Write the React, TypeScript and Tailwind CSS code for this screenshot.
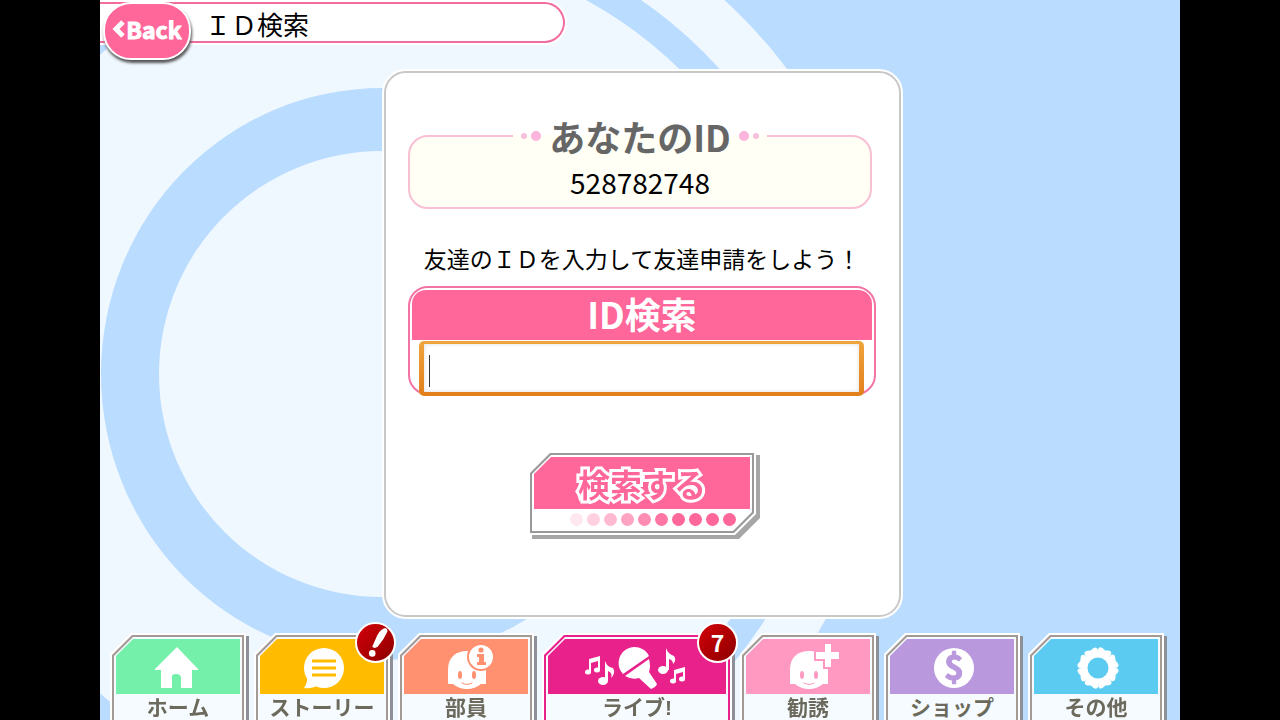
import { useState, type ReactNode } from "react";

type Tab = {
  label: string;
  fill: string;
  line?: string;
  wide?: boolean;
  badge?: ReactNode;
  icon: ReactNode;
};

// Opacity steps of the dot row under the search button
const DOTS = [
  "opacity-15",
  "opacity-30",
  "opacity-45",
  "opacity-60",
  "opacity-75",
  "opacity-90",
  "opacity-100",
  "opacity-100",
  "opacity-100",
  "opacity-100",
];

const TEETH = [0, 1, 2, 3, 4, 5, 6, 7];

// Chibi head shared by the member and invite tabs
function Face({ eye }: { eye: string }) {
  return (
    <g>
      <path
        d="M42 45V31C42 18 50 12 61 12S80 19 80 31V45H75Q69 50 61 50Q53 50 47 45Z"
        fill="white"
      />
      <ellipse cx="54" cy="36" rx="2" ry="4" fill={eye} />
      <ellipse cx="68" cy="36" rx="2" ry="4" fill={eye} />
      <path d="M56 44Q61 47 66 44" fill="none" stroke={eye} strokeWidth="1" strokeLinecap="round" />
    </g>
  );
}

const TABS: Tab[] = [
  {
    label: "ホーム",
    fill: "bg-[#75f0ab]",
    icon: (
      <path d="M59 8L80 30V31H74V49H63V39Q63 35 58 35T54 39V49H43V31H37V30Z" fill="white" />
    ),
  },
  {
    label: "ストーリー",
    fill: "bg-[#ffbb00]",
    badge: (
      <svg viewBox="0 0 34 34" className="size-full" aria-label="新着">
        <path d="M25 4Q20 6 17 14L14 21Q16 23 19 21Q25 14 28 7Q28 3 25 4Z" fill="white" />
        <circle cx="14" cy="27" r="3" fill="white" />
      </svg>
    ),
    icon: (
      <g>
        <circle cx="62" cy="29" r="20" fill="white" />
        <path d="M45 36Q46 44 42 49Q50 50 56 46Z" fill="white" />
        <path d="M50 22H74M50 29H74M50 36H74" stroke="#ffbb00" strokeWidth="3" />
      </g>
    ),
  },
  {
    label: "部員",
    fill: "bg-[#ff9070]",
    icon: (
      <g>
        <Face eye="#ff9070" />
        <circle cx="75" cy="18" r="13" fill="white" stroke="#ff9070" strokeWidth="2" />
        <circle cx="75" cy="11" r="2.600" fill="#ff9070" />
        <path d="M71 15H78V23H80V26H71V23H73V18H71Z" fill="#ff9070" />
      </g>
    ),
  },
  {
    label: "ライブ!",
    fill: "bg-[#e9218b]",
    line: "bg-[#e9218b]",
    wide: true,
    badge: "7",
    icon: (
      <g fill="white">
        <path d="M75 35A16 16 0 1 1 101 17Z" />
        <path d="M77 37L101 20Q103 27 101 33L109 45Q108 48 103 50L91 39Q84 41 77 37Z" />
        <path d="M41 20L52 17V31H50V22L43 24V34H41Z" />
        <ellipse cx="40" cy="33" rx="3" ry="2.500" />
        <ellipse cx="49" cy="31" rx="3" ry="2.500" />
        <path d="M57 22Q59 28 65 29Q68 34 63 39Q65 34 60 32V42H57Z" />
        <ellipse cx="55" cy="42" rx="5" ry="4" />
        <path d="M118 9Q120 15 126 17Q129 21 125 25Q125 21 121 20V31H118Z" />
        <ellipse cx="115" cy="31" rx="5" ry="4" />
        <path d="M126 31L137 28V40H135V33L128 35V43H126Z" />
        <ellipse cx="125" cy="42" rx="3" ry="2.500" />
        <ellipse cx="134" cy="40" rx="3" ry="2.500" />
      </g>
    ),
  },
  {
    label: "勧誘",
    fill: "bg-[#ff99c2]",
    icon: (
      <g>
        <Face eye="#ff99c2" />
        <path
          d="M76 4H84V12H92V21H84V29H76V21H67V12H76Z"
          fill="white"
          stroke="#ff99c2"
          strokeWidth="2"
        />
      </g>
    ),
  },
  {
    label: "ショップ",
    fill: "bg-[#ba98dd]",
    icon: (
      <g>
        <circle cx="62" cy="29" r="20" fill="white" />
        <text
          x="62"
          y="41"
          textAnchor="middle"
          fontSize="34"
          fontWeight="700"
          fill="#ba98dd"
          stroke="#ba98dd"
          strokeWidth="1"
          strokeLinejoin="round"
        >
          $
        </text>
      </g>
    ),
  },
  {
    label: "その他",
    fill: "bg-[#5bcbf2]",
    icon: (
      <g transform="translate(62 29)">
        <circle r="13" fill="none" stroke="white" strokeWidth="5" />
        {TEETH.map((n) => (
          <path
            key={n}
            d="M-5 -12L-7 -17Q-7 -21 -3 -20L0 -19L3 -20Q7 -21 7 -17L5 -12Z"
            fill="white"
            transform={`rotate(${n * 45 + 22})`}
          />
        ))}
      </g>
    ),
  },
];

function Backdrop() {
  return (
    <svg
      viewBox="0 0 1080 720"
      preserveAspectRatio="xMinYMin slice"
      className="absolute inset-0 size-full"
      aria-hidden="true"
    >
      <circle cx="282" cy="374" r="507" fill="#f0f8ff" />
      <circle cx="282" cy="374" r="455" fill="#badcff" />
      <circle cx="282" cy="374" r="426" fill="#f0f8ff" />
      <ellipse cx="282" cy="374" rx="281" ry="286" fill="#badcff" />
      <circle cx="282" cy="374" r="223" fill="#f0f8ff" />
    </svg>
  );
}

function NavTab({ tab }: { tab: Tab }) {
  const line = tab.line ?? "bg-[#a39a96]";
  return (
    <li className={tab.wide ? "relative w-[190px] shrink-0" : "relative min-w-0 flex-1"}>
      <button type="button" className="block w-full drop-shadow-[3px_3px_0_#8f8f98]">
        <span className="block bg-white px-0.5 pt-0.5 [clip-path:polygon(21px_0,100%_0,100%_100%,0_100%,0_21px)]">
          <span className={`block px-0.5 pt-0.5 [clip-path:polygon(20px_0,100%_0,100%_100%,0_100%,0_20px)] ${line}`}>
            <span className="block bg-[#f6fbff] px-0.5 pt-0.5 [clip-path:polygon(19px_0,100%_0,100%_100%,0_100%,0_19px)]">
              <span
                className={`flex h-[55px] justify-center [clip-path:polygon(17px_0,100%_0,100%_100%,0_100%,0_17px)] ${tab.fill}`}
              >
                <svg
                  viewBox={tab.wide ? "0 0 178 55" : "0 0 120 55"}
                  className={tab.wide ? "h-[55px] w-[178px]" : "h-[55px] w-[120px]"}
                  aria-hidden="true"
                >
                  {tab.icon}
                </svg>
              </span>
              <span className="block pt-0.5 text-center font-['Liberation_Sans','Noto_Sans_CJK_JP',sans-serif] text-[21px] leading-6 font-bold whitespace-nowrap text-[#6b6a5c]">
                {tab.label}
              </span>
            </span>
          </span>
        </span>
      </button>
      {tab.badge && (
        <span className="absolute -top-[11px] -right-1.5 flex size-[41px] items-center justify-center rounded-full border-2 border-white bg-linear-to-br from-[#d4000c] to-[#8c0000] text-[23px] font-bold text-white">
          {tab.badge}
        </span>
      )}
    </li>
  );
}

export default function App() {
  const [friendId, setFriendId] = useState("");

  return (
    <div className="flex h-screen justify-center overflow-hidden bg-black font-['Noto_Sans_CJK_JP',sans-serif] text-black">
      <div className="relative flex aspect-[3/2] h-full flex-col overflow-hidden bg-[#badcff]">
        <Backdrop />

        <header className="relative flex pt-0.5">
          <div className="flex h-[41px] w-[465px] items-start gap-3.5 rounded-r-full border-y-2 border-r-2 border-[#f26d9f] bg-white pl-[3px] shadow-[0_0_0_2px_white]">
            <button
              type="button"
              className="-mt-0.5 flex h-[58px] w-[88px] items-center justify-center rounded-[28px] border-2 border-white bg-[#ff6699] pb-1 text-[23px] font-bold text-white shadow-[1px_3px_3px_#555] [-webkit-text-stroke:1px_white]"
            >
              <svg viewBox="0 0 14 20" className="h-5 w-3.5" aria-hidden="true">
                <path d="M11 3L4 10L11 17" fill="none" stroke="white" strokeWidth="5" />
              </svg>
              Back
            </button>
            <h1 className="text-[26px] leading-10">ＩＤ検索</h1>
          </div>
        </header>

        <main className="relative flex flex-1 flex-col pt-7 pr-[279px] pb-4 pl-[284px]">
          <form
            onSubmit={(e) => e.preventDefault()}
            className="flex flex-1 flex-col items-center rounded-[22px] border-2 border-[#c8c8c8] bg-white pt-[45px] pr-[23px] pl-[22px] shadow-[0_0_0_2px_white]"
          >
            <fieldset className="mr-1 self-stretch rounded-[20px] border-2 border-[#f9bfd3] bg-[#fffff6] pt-3 pb-[9px] text-center">
              <legend className="mx-auto">
                <span className="flex items-center gap-1 px-2">
                  <span className="size-1.5 rounded-full bg-[#f9bfdb]" />
                  <span className="mr-1 size-2.5 rounded-full bg-[#fbb4dc]" />
                  <span className="text-4xl leading-9 font-bold text-[#666]">あなたのID</span>
                  <span className="ml-1 size-2.5 rounded-full bg-[#fbb4dc]" />
                  <span className="size-1.5 rounded-full bg-[#f9bfdb]" />
                </span>
              </legend>
              <output className="block text-[28px] leading-8">528782748</output>
            </fieldset>

            <p className="mt-[34px] text-[23px] leading-[30px] whitespace-nowrap">
              友達のＩＤを入力して友達申請をしよう！
            </p>

            <div className="mt-[13px] h-[109px] w-full rounded-[20px] border-2 border-[#f274a4] p-0.5">
              <label
                htmlFor="friend-id"
                className="block rounded-t-[14px] bg-[#ff6699] pb-1 text-center text-4xl leading-[46px] font-bold text-white"
              >
                ID検索
              </label>
              <div className="relative mr-2 ml-[7px] mt-px flex h-[55px] rounded-[5px] bg-linear-to-b from-[#f0a43c] to-[#e27f1a] px-[5px] pt-[3px] pb-1">
                <input
                  id="friend-id"
                  type="text"
                  inputMode="numeric"
                  value={friendId}
                  onChange={(e) => setFriendId(e.target.value)}
                  className="peer min-w-0 flex-1 bg-white px-1.5 text-[28px] shadow-[inset_0_0_4px_#ddd] outline-none"
                />
                <span className="pointer-events-none absolute top-3.5 left-2.5 h-8 w-px bg-[#333] peer-focus:hidden" />
              </div>
            </div>

            <button type="submit" className="mt-14 block w-[228px] drop-shadow-[4px_4px_0_#a6a6a6]">
              <span className="block bg-white p-0.5 [clip-path:polygon(21px_0,100%_0,100%_calc(100%-21px),calc(100%-21px)_100%,0_100%,0_21px)]">
                <span className="block bg-[#999] p-0.5 [clip-path:polygon(20px_0,100%_0,100%_calc(100%-20px),calc(100%-20px)_100%,0_100%,0_20px)]">
                  <span className="block bg-white p-0.5 [clip-path:polygon(19px_0,100%_0,100%_calc(100%-19px),calc(100%-19px)_100%,0_100%,0_19px)]">
                    <span className="block bg-[#ff6699] text-[32px] leading-[52px] font-bold text-[#ff6699] [-webkit-text-stroke:6px_white] [clip-path:polygon(17px_0,100%_0,100%_100%,0_100%,0_17px)] [paint-order:stroke_fill] [stroke-linejoin:round]">
                      検索する
                    </span>
                    <span className="flex h-5 items-center justify-end gap-1 pr-3.5">
                      {DOTS.map((dot, i) => (
                        <span key={i} className={`size-[13px] rounded-full bg-[#ff6699] ${dot}`} />
                      ))}
                    </span>
                  </span>
                </span>
              </span>
            </button>
          </form>
        </main>

        <nav className="relative pr-4 pl-2.5">
          <ul className="flex gap-2">
            {TABS.map((tab) => (
              <NavTab key={tab.label} tab={tab} />
            ))}
          </ul>
        </nav>
      </div>
    </div>
  );
}
